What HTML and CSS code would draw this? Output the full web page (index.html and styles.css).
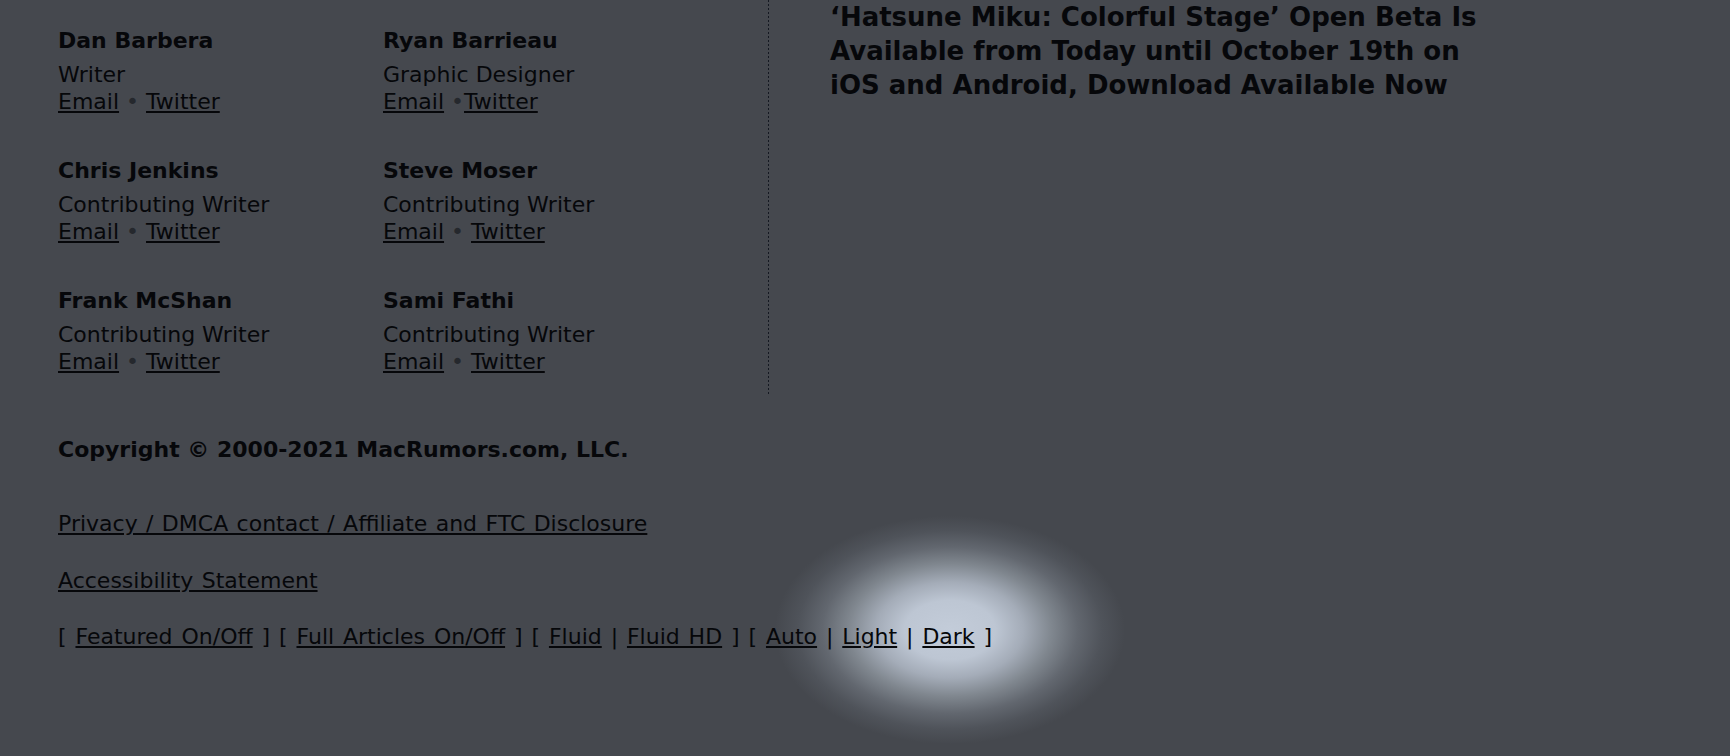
FILE: index.html
```html
<!DOCTYPE html>
<html lang="en">
<head>
<meta charset="utf-8">
<title>MacRumors footer</title>
<link rel="stylesheet" href="styles.css">
</head>
<body>
<div class="page">
  <div class="top">
    <div class="staff">
      <div class="person">
        <div class="name">Dan Barbera</div>
        <div class="role">Writer</div>
        <div class="links"><a href="#">Email</a> <span class="dot">•</span> <a href="#">Twitter</a></div>
      </div>
      <div class="person">
        <div class="name">Ryan Barrieau</div>
        <div class="role">Graphic Designer</div>
        <div class="links"><a href="#">Email</a> <span class="dot">•</span><a href="#">Twitter</a></div>
      </div>
      <div class="person">
        <div class="name">Chris Jenkins</div>
        <div class="role">Contributing Writer</div>
        <div class="links"><a href="#">Email</a> <span class="dot">•</span> <a href="#">Twitter</a></div>
      </div>
      <div class="person">
        <div class="name">Steve Moser</div>
        <div class="role">Contributing Writer</div>
        <div class="links"><a href="#">Email</a> <span class="dot">•</span> <a href="#">Twitter</a></div>
      </div>
      <div class="person">
        <div class="name">Frank McShan</div>
        <div class="role">Contributing Writer</div>
        <div class="links"><a href="#">Email</a> <span class="dot">•</span> <a href="#">Twitter</a></div>
      </div>
      <div class="person">
        <div class="name">Sami Fathi</div>
        <div class="role">Contributing Writer</div>
        <div class="links"><a href="#">Email</a> <span class="dot">•</span> <a href="#">Twitter</a></div>
      </div>
    </div>
    <div class="news">
      <h2 class="headline">‘Hatsune Miku: Colorful Stage’ Open Beta Is Available from Today until October 19th on iOS and Android, Download Available Now</h2>
    </div>
  </div>
  <div class="footer">
    <p class="copyright">Copyright © 2000-2021 MacRumors.com, LLC.</p>
    <p class="line privacy"><a href="#">Privacy / DMCA contact / Affiliate and FTC Disclosure</a></p>
    <p class="line"><a href="#">Accessibility Statement</a></p>
    <p class="line toggles">[ <a href="#">Featured On/Off</a> ] [ <a href="#">Full Articles On/Off</a> ] [ <a href="#">Fluid</a> | <a href="#">Fluid HD</a> ] [ <a href="#">Auto</a> | <a href="#">Light</a> | <a href="#">Dark</a> ]</p>
  </div>
</div>
</body>
</html>
```

FILE: styles.css
```css
html, body {
  margin: 0;
  padding: 0;
  height: 100%;
}
body {
  background:
    radial-gradient(ellipse 175px 114px at 950px 630px,
      #c3ccd9 0%, #bdc6d3 26%, #a4acb8 42%, #80878f 58%, #62676f 73%, #4f535a 87%, rgba(69,72,78,0) 100%),
    #45484e;
  color: #06070a;
  font-family: "DejaVu Sans", Verdana, sans-serif;
  font-size: 22px;
  line-height: 27px;
  overflow: hidden;
}
a {
  color: #06070a;
  text-decoration: underline;
}
.page {
  padding-left: 58px;
}
.top {
  display: flex;
  align-items: flex-start;
}
.staff {
  width: 710px;
  background: linear-gradient(to bottom, #141821 0 2px, transparent 2px) right top / 1px 4px repeat-y;
  padding-right: 1px;
  display: grid;
  grid-template-columns: 325px 325px;
  padding-top: 27px;
  padding-bottom: 20px;
  row-gap: 42px;
}
.person .name {
  font-weight: bold;
  margin-bottom: 7px;
}
.dot {
  color: #25282d;
}
.news {
  padding-left: 61px;
  width: 660px;
}
.headline {
  margin: 0;
  font-size: 26px;
  line-height: 34px;
  font-weight: bold;
  color: #06070a;
}
.footer {
  padding-top: 41px;
}
.footer p {
  margin: 0;
}
.copyright {
  font-weight: bold;
  margin-bottom: 47px !important;
}
.line {
  margin-bottom: 29.5px !important;
  word-spacing: 1.4px;
}
.toggles {
  word-spacing: 1.9px;
}
```
